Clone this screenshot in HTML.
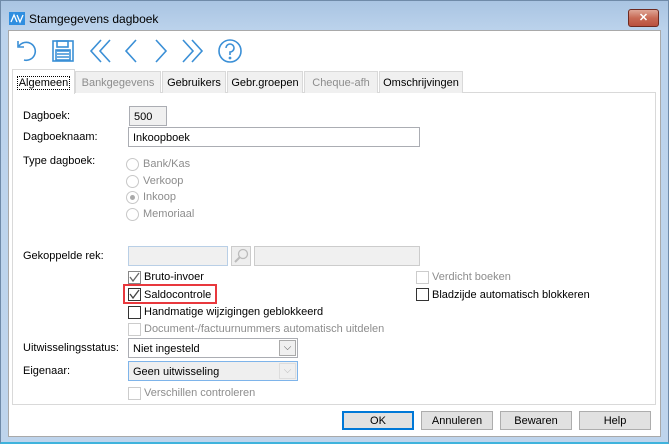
<!DOCTYPE html>
<html><head><style>
*{margin:0;padding:0;box-sizing:border-box}
body{width:669px;height:444px;position:relative;overflow:hidden;background:#b9d1ea;font-family:"Liberation Sans",sans-serif;font-size:11px;color:#000}
.a{position:absolute;white-space:nowrap}
.frame{position:absolute;left:0;top:0;width:669px;height:444px;background:linear-gradient(#a9c4e2,#bcd3ec 30px,#bed4ec);border:1px solid #6f8aa8;border-bottom:2px solid #3fb3dc}
.client{position:absolute;left:8px;top:30px;width:653px;height:407px;background:#fff;border:1px solid #a9a9a9}
.tab{position:absolute;top:71px;height:22px;border:1px solid #d9d9d9;border-bottom:none;background:#f0f0f0;text-align:center;line-height:23px}
.dis{color:#8d8d8d}
.inp{position:absolute;border:1px solid #abadb3;background:#fff;padding-left:4px;padding-top:1px;line-height:19px}
.cb{position:absolute;width:13px;height:13px;border:1px solid #333;background:#fff}
.cb.d{border-color:#ccc}
.rd{position:absolute;width:13px;height:13px;border:1px solid #c8c8c8;border-radius:50%;background:#fff}
.btn{position:absolute;top:411px;width:72px;height:19px;border:1px solid #adadad;background:#e1e1e1;text-align:center;line-height:19px}
</style></head><body>
<div class="frame"></div>
<svg class="a" style="left:9px;top:12px" width="16" height="13"><rect width="16" height="13" fill="#2f8ee0"/><path d="M2 10 L5 3 L8 10 M8 3 L11 10 L14 3" stroke="#fff" stroke-width="1.3" fill="none"/></svg>
<div class="a" style="left:29px;top:12px;font-size:12px">Stamgegevens dagboek</div>
<div class="a" style="left:628px;top:9px;width:31px;height:18px;background:linear-gradient(#dfa697,#c86a55 50%,#b9503e);border:1px solid #6e2a20;border-radius:3px;color:#fff;text-align:center;font-weight:bold;font-size:11px;line-height:16px">✕</div>
<div class="client"></div>
<svg class="a" style="left:14px;top:36px" width="232" height="30" fill="none" stroke="#3a8fd6" stroke-width="1.6">
<path d="M4 5 V11 H10 M5 10 A9 9 0 1 1 10 24"/>
<rect x="39" y="5" width="20" height="20"/><rect x="43" y="5" width="11" height="6"/><path d="M43 15 H55 M43 18 H55 M43 21 H55"/><rect x="42" y="14" width="14" height="10"/>
<path d="M87 4 L77 15 L87 26 M96 4 L86 15 L96 26"/>
<path d="M122 4 L112 15 L122 26"/>
<path d="M142 4 L152 15 L142 26"/>
<path d="M169 4 L179 15 L169 26 M178 4 L188 15 L178 26"/>
<circle cx="216" cy="15" r="11"/><path d="M212 12 A4 4 0 1 1 216 16 V19"/><circle cx="216" cy="22" r=".6"/>
</svg>
<div class="a" style="left:12px;top:92px;width:644px;height:313px;border:1px solid #d9d9d9;background:#fff"></div>
<div class="tab" style="left:75px;width:86px" ><span class="dis">Bankgegevens</span></div>
<div class="tab" style="left:162px;width:64px">Gebruikers</div>
<div class="tab" style="left:227px;width:76px">Gebr.groepen</div>
<div class="tab dis" style="left:304px;width:74px">Cheque-afh</div>
<div class="tab" style="left:379px;width:84px">Omschrijvingen</div>
<div class="tab" style="left:12px;top:69px;width:63px;height:25px;background:#fff;line-height:27px"><span style="border:1px dotted #000;padding:0 1px">Algemeen</span></div>
<div class="a" style="left:23px;top:110px">Dagboek:</div>
<div class="a" style="left:23px;top:131px">Dagboeknaam:</div>
<div class="a" style="left:23px;top:155px">Type dagboek:</div>
<div class="inp" style="left:129px;top:106px;width:38px;height:20px;background:#f0f0f0">500</div>
<div class="inp" style="left:128px;top:127px;width:292px;height:20px">Inkoopboek</div>
<div class="rd" style="left:126px;top:158px"></div><div class="a dis" style="left:143px;top:158px">Bank/Kas</div>
<div class="rd" style="left:126px;top:175px"></div><div class="a dis" style="left:143px;top:175px">Verkoop</div>
<div class="rd" style="left:126px;top:191px"><div style="margin:3px;width:5px;height:5px;border-radius:50%;background:#aaa"></div></div><div class="a dis" style="left:143px;top:191px">Inkoop</div>
<div class="rd" style="left:126px;top:208px"></div><div class="a dis" style="left:143px;top:208px">Memoriaal</div>
<div class="a" style="left:23px;top:250px">Gekoppelde rek:</div>
<div class="inp" style="left:128px;top:246px;width:100px;height:20px;background:#f0f0f0;border-color:#b9cfe6"></div>
<div class="a" style="left:231px;top:246px;width:20px;height:20px;border:1px solid #ccc;background:#eee"><svg width="18" height="18"><circle cx="11" cy="7" r="4.5" fill="none" stroke="#bbb" stroke-width="1.3"/><path d="M8 10 L3 15" stroke="#bbb" stroke-width="2"/></svg></div>
<div class="inp" style="left:254px;top:246px;width:166px;height:20px;background:#f0f0f0;border-color:#ccc"></div>
<div class="cb" style="left:128px;top:271px;border-color:#888"><svg width="11" height="11"><path d="M1 5 L4 9 L10 1" stroke="#666" stroke-width="1.3" fill="none"/></svg></div><div class="a" style="left:144px;top:271px">Bruto-invoer</div>
<div class="cb" style="left:128px;top:288px"><svg width="11" height="11"><path d="M1 5 L4 9 L10 1" stroke="#444" stroke-width="1.3" fill="none"/></svg></div><div class="a" style="left:144px;top:289px">Saldocontrole</div>
<div class="a" style="left:123px;top:284px;width:94px;height:20px;border:2px solid #e8383d"></div>
<div class="cb" style="left:128px;top:306px"></div><div class="a" style="left:144px;top:306px">Handmatige wijzigingen geblokkeerd</div>
<div class="cb d" style="left:128px;top:323px"></div><div class="a dis" style="left:144px;top:323px">Document-/factuurnummers automatisch uitdelen</div>
<div class="cb d" style="left:416px;top:271px"></div><div class="a dis" style="left:432px;top:271px">Verdicht boeken</div>
<div class="cb" style="left:416px;top:288px"></div><div class="a" style="left:432px;top:289px">Bladzijde automatisch blokkeren</div>
<div class="a" style="left:23px;top:342px">Uitwisselingsstatus:</div>
<div class="a" style="left:23px;top:365px">Eigenaar:</div>
<div class="inp" style="left:128px;top:338px;width:170px;height:20px">Niet ingesteld<div class="a" style="right:1px;top:1px;width:17px;height:16px;border:1px solid #aaa;background:#f0f0f0;text-align:center;line-height:13px;font-size:10px;color:#555">⌵</div></div>
<div class="inp" style="left:128px;top:361px;width:170px;height:20px;background:#efefef;border-color:#7eb4ea">Geen uitwisseling<div class="a" style="right:1px;top:1px;width:17px;height:16px;border:1px solid #ddd;text-align:center;line-height:13px;font-size:10px;color:#bbb">⌵</div></div>
<div class="cb d" style="left:128px;top:387px"></div><div class="a dis" style="left:144px;top:387px">Verschillen controleren</div>
<div class="btn" style="left:342px;border:2px solid #0078d7;line-height:17px">OK</div>
<div class="btn" style="left:421px">Annuleren</div>
<div class="btn" style="left:500px">Bewaren</div>
<div class="btn" style="left:579px">Help</div>
</body></html>
